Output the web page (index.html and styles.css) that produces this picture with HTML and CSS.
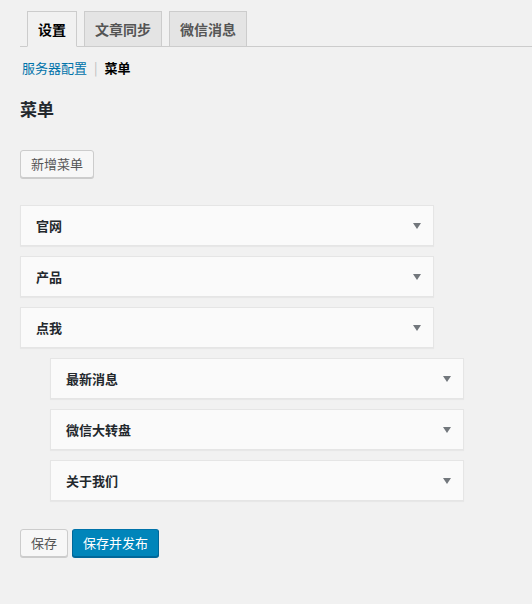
FILE: index.html
```html
<!DOCTYPE html>
<html lang="zh-CN">
<head>
    <meta charset="UTF-8">
    <meta name="viewport" content="width=device-width, initial-scale=1.0">
    <title>菜单</title>
    <link rel="stylesheet" href="styles.css">
</head>
<body>
    <div class="wrap">
        <!-- Tabs -->
        <nav class="nav-tab-wrapper">
            <a href="#" class="nav-tab nav-tab-active">设置</a>
            <a href="#" class="nav-tab">文章同步</a>
            <a href="#" class="nav-tab">微信消息</a>
        </nav>

        <!-- Sub navigation -->
        <div class="subsubsub">
            <a href="#">服务器配置</a>
            <span class="sep">|</span>
            <span class="current">菜单</span>
        </div>

        <h2 class="page-title">菜单</h2>

        <button type="button" class="button">新增菜单</button>

        <div class="menu-list">
            <div class="menu-item"><span>官网</span><i class="arrow"></i></div>
            <div class="menu-item"><span>产品</span><i class="arrow"></i></div>
            <div class="menu-item"><span>点我</span><i class="arrow"></i></div>
            <div class="menu-item sub"><span>最新消息</span><i class="arrow"></i></div>
            <div class="menu-item sub"><span>微信大转盘</span><i class="arrow"></i></div>
            <div class="menu-item sub"><span>关于我们</span><i class="arrow"></i></div>
        </div>

        <div class="actions">
            <button type="button" class="button">保存</button>
            <button type="button" class="button button-primary">保存并发布</button>
        </div>
    </div>
</body>
</html>
```

FILE: styles.css
```css
html, body {
    margin: 0;
    padding: 0;
    background-color: #f1f1f1;
    height: 100%;
}
body {
    font-family: "Noto Sans CJK SC", "Liberation Sans", sans-serif;
    font-size: 13px;
    color: #444;
}
.wrap {
    padding: 0 0 0 20px;
}
.nav-tab-wrapper {
    display: flex;
    padding-top: 11px;
    border-bottom: 1px solid #ccc;
}
.nav-tab {
    display: block;
    margin-left: 7px;
    margin-bottom: -1px;
    padding: 5px 10px;
    font-size: 14px;
    line-height: 24px;
    font-weight: 600;
    color: #555;
    text-decoration: none;
    background-color: #e4e4e4;
    border: 1px solid #ccc;
}
.nav-tab-active {
    color: #000;
    background-color: #f1f1f1;
    border-bottom-color: #f1f1f1;
}
.subsubsub {
    margin-top: 8px;
    line-height: 26px;
    font-size: 13px;
}
.subsubsub a {
    color: #0073aa;
    text-decoration: none;
    margin-left: 2px;
}
.subsubsub .sep {
    color: #bbb;
    margin: 0 4px;
}
.subsubsub .current {
    color: #000;
    font-weight: 600;
}
.page-title {
    margin: 16px 0 0;
    font-size: 17px;
    line-height: 23px;
    font-weight: 600;
    color: #23282d;
}
.button {
    display: inline-block;
    height: 28px;
    margin: 30px 0 0;
    padding: 0 10px 1px;
    font-family: inherit;
    font-size: 13px;
    line-height: 26px;
    color: #555;
    background: #f7f7f7;
    border: 1px solid #ccc;
    border-radius: 3px;
    box-shadow: 0 1px 0 #ccc;
    cursor: pointer;
    vertical-align: top;
}
.button-primary {
    color: #fff;
    background: #0085ba;
    border-color: #0073aa #006799 #006799;
    box-shadow: 0 1px 0 #006799;
}
.menu-list {
    display: flex;
    flex-direction: column;
    gap: 10px;
    margin-top: 27px;
}
.menu-item {
    display: flex;
    align-items: center;
    justify-content: space-between;
    box-sizing: border-box;
    width: 414px;
    height: 41px;
    padding: 0 12px 0 15px;
    background: #fafafa;
    border: 1px solid #e5e5e5;
    box-shadow: 0 1px 1px rgba(0, 0, 0, 0.04);
    font-size: 13px;
    font-weight: 600;
    color: #23282d;
}
.menu-item.sub {
    margin-left: 30px;
}
.arrow {
    width: 0;
    height: 0;
    border-left: 4px solid transparent;
    border-right: 4px solid transparent;
    border-top: 6px solid #72777c;
}
.actions {
    display: flex;
    gap: 4px;
    margin-top: 28px;
}
.actions .button {
    margin-top: 0;
}
```
